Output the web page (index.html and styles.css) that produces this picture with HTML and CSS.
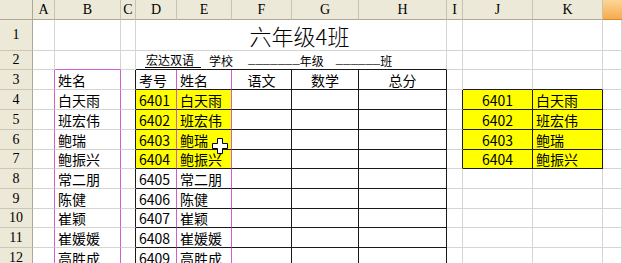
FILE: index.html
```html
<!DOCTYPE html>
<html lang="zh-CN">
<head>
<meta charset="utf-8">
<title>六年级4班</title>
<link rel="stylesheet" href="styles.css">
</head>
<body>
<div class="sheet">
  <!-- column headers -->
  <div class="corner"></div>
  <div class="ch">A</div>
  <div class="ch">B</div>
  <div class="ch">C</div>
  <div class="ch">D</div>
  <div class="ch">E</div>
  <div class="ch">F</div>
  <div class="ch">G</div>
  <div class="ch">H</div>
  <div class="ch">I</div>
  <div class="ch">J</div>
  <div class="ch">K</div>
  <div class="ch ch-sel"></div>

  <!-- row 1 -->
  <div class="rh">1</div>
  <div class="c"></div>
  <div class="c"></div>
  <div class="c"></div>
  <div class="c span5 title">六年级4班</div>
  <div class="c"></div>
  <div class="c"></div>
  <div class="c"></div>
  <div class="c"></div>

  <!-- row 2 -->
  <div class="rh">2</div>
  <div class="c"></div>
  <div class="c bp"></div>
  <div class="c"></div>
  <div class="c span5 bk sub">
    <span class="ul">宏达双语</span>
    <span class="school">学校</span>
    <span class="blank b1">_______</span><span>年级</span>
    <span class="blank b2">______</span><span>班</span>
  </div>
  <div class="c"></div>
  <div class="c"></div>
  <div class="c"></div>
  <div class="c"></div>

  <!-- row 3 -->
  <div class="rh">3</div>
  <div class="c rp"></div>
  <div class="c rp t">姓名</div>
  <div class="c rk"></div>
  <div class="c rp bk t">考号</div>
  <div class="c rp bk t">姓名</div>
  <div class="c rk bk t m">语文</div>
  <div class="c rk bk t m">数学</div>
  <div class="c rk bk t m">总分</div>
  <div class="c"></div>
  <div class="c bk"></div>
  <div class="c bk"></div>
  <div class="c"></div>

  <!-- row 4 -->
  <div class="rh">4</div>
  <div class="c rp"></div>
  <div class="c rp t">白天雨</div>
  <div class="c rk"></div>
  <div class="c rp bk y t">6401</div>
  <div class="c rp bk y t">白天雨</div>
  <div class="c rk bk"></div>
  <div class="c rk bk"></div>
  <div class="c rk bk"></div>
  <div class="c rk"></div>
  <div class="c rk bk y t m">6401</div>
  <div class="c rk bk y t">白天雨</div>
  <div class="c"></div>

  <!-- row 5 -->
  <div class="rh">5</div>
  <div class="c rp"></div>
  <div class="c rp t">班宏伟</div>
  <div class="c rk"></div>
  <div class="c rp bk y t">6402</div>
  <div class="c rp bk y t">班宏伟</div>
  <div class="c rk bk"></div>
  <div class="c rk bk"></div>
  <div class="c rk bk"></div>
  <div class="c rk"></div>
  <div class="c rk bk y t m">6402</div>
  <div class="c rk bk y t">班宏伟</div>
  <div class="c"></div>

  <!-- row 6 -->
  <div class="rh">6</div>
  <div class="c rp"></div>
  <div class="c rp t">鲍瑞</div>
  <div class="c rk"></div>
  <div class="c rp bk y t">6403</div>
  <div class="c rp bk y t">鲍瑞</div>
  <div class="c rk bk"></div>
  <div class="c rk bk"></div>
  <div class="c rk bk"></div>
  <div class="c rk"></div>
  <div class="c rk bk y t m">6403</div>
  <div class="c rk bk y t">鲍瑞</div>
  <div class="c"></div>

  <!-- row 7 -->
  <div class="rh">7</div>
  <div class="c rp"></div>
  <div class="c rp t">鲍振兴</div>
  <div class="c rk"></div>
  <div class="c rp bk y t">6404</div>
  <div class="c rp bk y t">鲍振兴</div>
  <div class="c rk bk"></div>
  <div class="c rk bk"></div>
  <div class="c rk bk"></div>
  <div class="c rk"></div>
  <div class="c rk bk y t m">6404</div>
  <div class="c rk bk y t">鲍振兴</div>
  <div class="c"></div>

  <!-- row 8 -->
  <div class="rh">8</div>
  <div class="c rp"></div>
  <div class="c rp t">常二朋</div>
  <div class="c rk"></div>
  <div class="c rp bk t">6405</div>
  <div class="c rp bk t">常二朋</div>
  <div class="c rk bk"></div>
  <div class="c rk bk"></div>
  <div class="c rk bk"></div>
  <div class="c"></div>
  <div class="c"></div>
  <div class="c"></div>
  <div class="c"></div>

  <!-- row 9 -->
  <div class="rh">9</div>
  <div class="c rp"></div>
  <div class="c rp t">陈健</div>
  <div class="c rk"></div>
  <div class="c rp bk t">6406</div>
  <div class="c rp bk t">陈健</div>
  <div class="c rk bk"></div>
  <div class="c rk bk"></div>
  <div class="c rk bk"></div>
  <div class="c"></div>
  <div class="c"></div>
  <div class="c"></div>
  <div class="c"></div>

  <!-- row 10 -->
  <div class="rh">10</div>
  <div class="c rp"></div>
  <div class="c rp t">崔颖</div>
  <div class="c rk"></div>
  <div class="c rp bk t">6407</div>
  <div class="c rp bk t">崔颖</div>
  <div class="c rk bk"></div>
  <div class="c rk bk"></div>
  <div class="c rk bk"></div>
  <div class="c"></div>
  <div class="c"></div>
  <div class="c"></div>
  <div class="c"></div>

  <!-- row 11 -->
  <div class="rh">11</div>
  <div class="c rp"></div>
  <div class="c rp t">崔媛媛</div>
  <div class="c rk"></div>
  <div class="c rp bk t">6408</div>
  <div class="c rp bk t">崔媛媛</div>
  <div class="c rk bk"></div>
  <div class="c rk bk"></div>
  <div class="c rk bk"></div>
  <div class="c"></div>
  <div class="c"></div>
  <div class="c"></div>
  <div class="c"></div>

  <!-- row 12 -->
  <div class="rh">12</div>
  <div class="c rp"></div>
  <div class="c rp t">高胜成</div>
  <div class="c rk"></div>
  <div class="c rp bk t">6409</div>
  <div class="c rp bk t">高胜成</div>
  <div class="c rk bk"></div>
  <div class="c rk bk"></div>
  <div class="c rk bk"></div>
  <div class="c"></div>
  <div class="c"></div>
  <div class="c"></div>
  <div class="c"></div>

  <svg class="cursor" width="16" height="16" viewBox="0 0 16 16" aria-hidden="true">
    <path d="M5.5 0.5h5v5h5v5h-5v5h-5v-5h-5v-5h5z" fill="#fff" stroke="#000" stroke-width="1"/>
  </svg>
</div>
</body>
</html>
```

FILE: styles.css
```css
html, body {
  margin: 0;
  padding: 0;
  background: #fff;
}

body {
  width: 622px;
  height: 263px;
  overflow: hidden;
  font-family: "Noto Sans CJK SC", "Noto Sans", sans-serif;
  color: #000;
}

.sheet {
  position: relative;
  display: grid;
  grid-template-columns: 33px 22px 66px 15px 41px 55px 60px 67px 88px 16px 70px 70px 19px;
  grid-template-rows: 20px 31px 19px 20px 20px 20px 20px 19px 20px 20px 19px 20px 20px;
}

.corner,
.ch,
.rh {
  background: #ece9d8;
  box-sizing: border-box;
  font-family: "Liberation Serif", "DejaVu Serif", serif;
  font-size: 14px;
  display: flex;
  align-items: center;
  justify-content: center;
  color: #000;
}

.corner {
  border-right: 1px solid #aca899;
  border-bottom: 1px solid #aca899;
}

.ch {
  border-right: 1px solid #c7c3b3;
  border-bottom: 1px solid #aca899;
  padding-top: 1px;
}

.ch-sel {
  background: linear-gradient(#fcd597, #f6ab4e);
  border-bottom-color: #d58a2e;
  border-right: none;
}

.rh {
  border-right: 1px solid #aca899;
  border-bottom: 1px solid #cbc7b6;
}

.c {
  box-sizing: border-box;
  border-right: 1px solid #d4d4d4;
  border-bottom: 1px solid #d4d4d4;
  display: flex;
  align-items: flex-end;
  white-space: nowrap;
  overflow: hidden;
  min-width: 0;
}

.rp { border-right-color: #cf5fcf; }
.rk { border-right-color: #1a1a1a; }
.bk { border-bottom-color: #1a1a1a; }
.bp { border-bottom-color: #cf5fcf; }

.y { background: #ffff00; }

.t {
  font-size: 14px;
  line-height: 17px;
  padding-left: 3px;
  padding-bottom: 0;
}

.m {
  justify-content: center;
  padding-left: 0;
}

.span5 {
  grid-column: span 5;
}

.title {
  justify-content: center;
  align-items: center;
  padding-left: 17px;
  font-size: 22px;
  font-weight: 300;
  line-height: 26px;
  border-right-color: #d4d4d4;
}

.sub {
  font-size: 12px;
  line-height: 15px;
  padding-left: 9px;
  padding-bottom: 1px;
}

.ul {
  display: inline-block;
  padding: 0 7px 0 1px;
  line-height: 14px;
  border-bottom: 1px solid #000;
}

.school {
  margin-left: 8px;
}

.blank {
  display: inline-block;
  font-family: "Liberation Mono", monospace;
  font-size: 12px;
  line-height: 15px;
  letter-spacing: 0.2px;
}

.b1 {
  margin-left: 15px;
}

.b2 {
  margin-left: 12px;
}

.cursor {
  position: absolute;
  left: 212px;
  top: 138px;
}
```
